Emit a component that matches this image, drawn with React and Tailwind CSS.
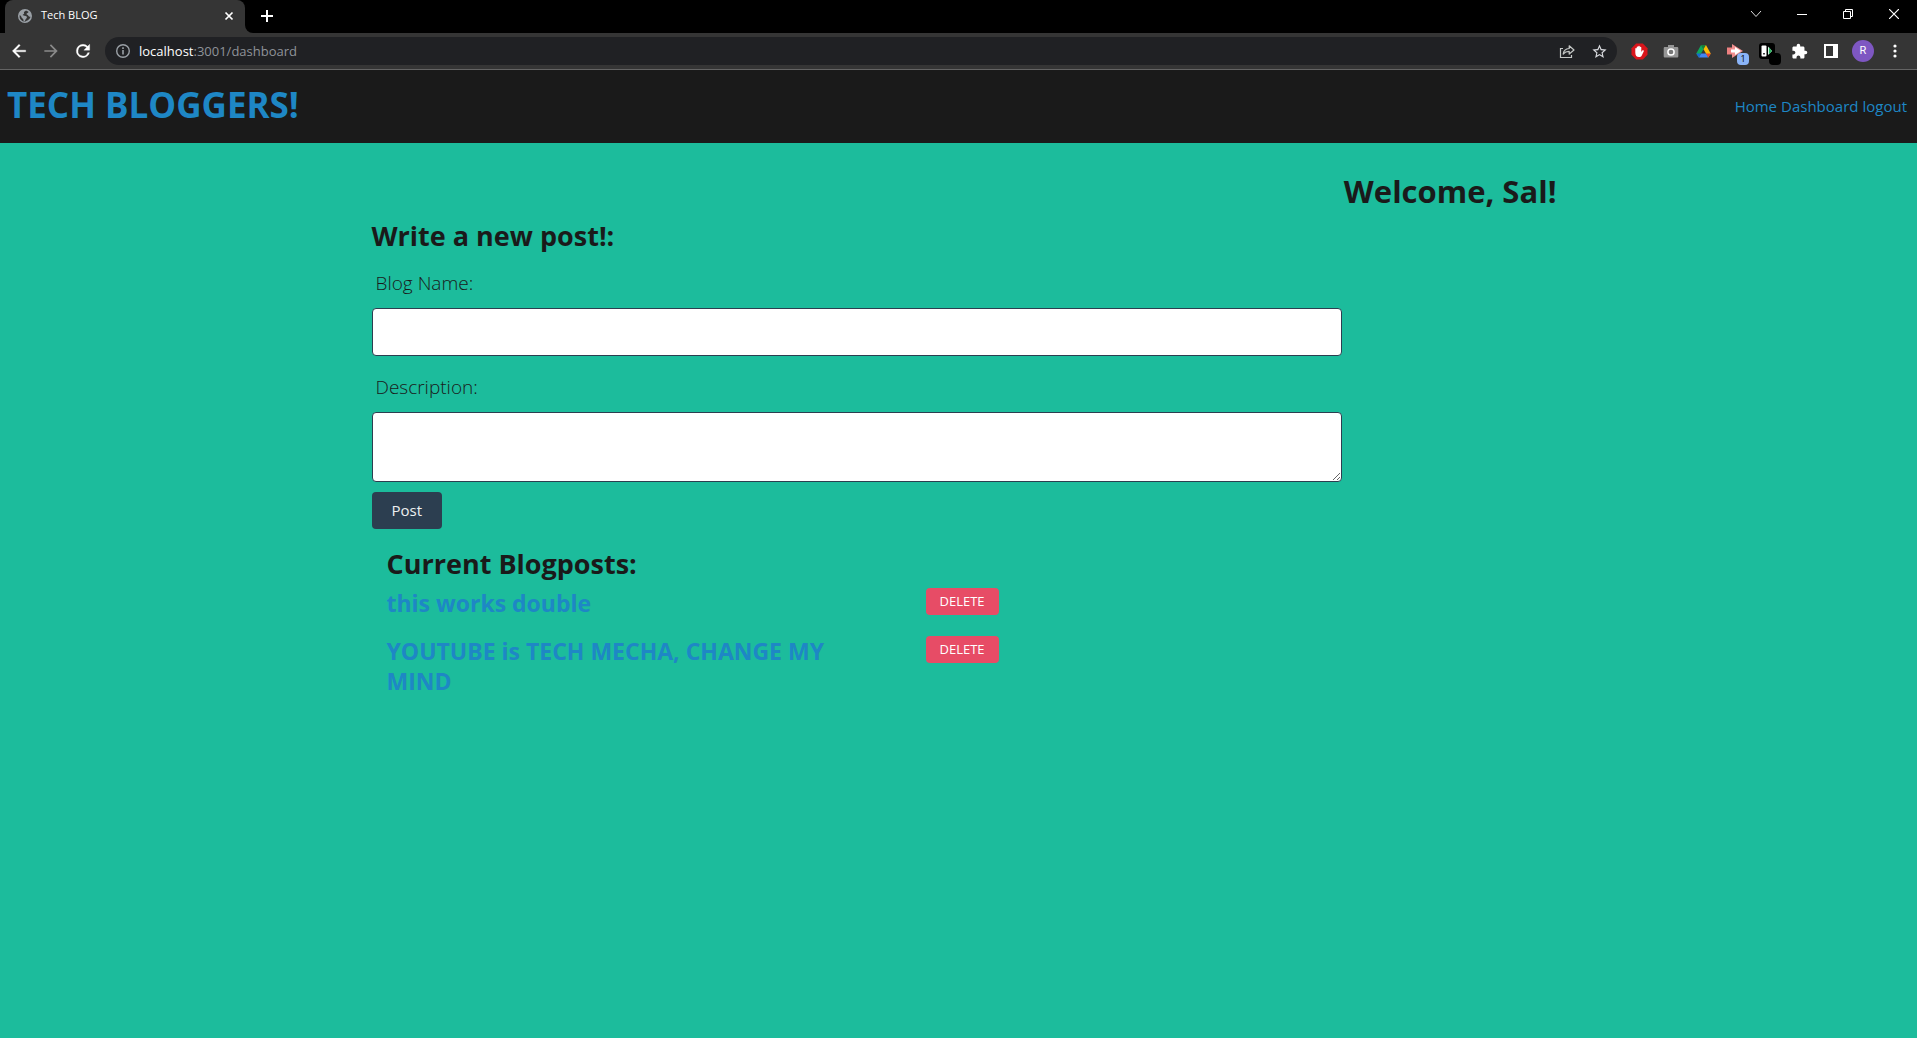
import React from "react";

const posts = ["this works double", "YOUTUBE is TECH MECHA, CHANGE MY MIND"];

function Svg({ size = 16, box = 24, children, ...rest }) {
  return (
    <svg width={size} height={size} viewBox={`0 0 ${box} ${box}`} fill="none" aria-hidden="true" {...rest}>
      {children}
    </svg>
  );
}

function Cell({ label, children }) {
  return (
    <button type="button" aria-label={label} className="relative flex h-9 w-8 shrink-0 items-center justify-center">
      {children}
    </button>
  );
}

function WindowButton({ label, children }) {
  return (
    <button type="button" aria-label={label} className="flex h-[27px] w-[46px] items-center justify-center">
      {children}
    </button>
  );
}

function TabStrip() {
  return (
    <div className="flex h-[33px] items-start bg-black text-white">
      <div className="relative ml-[5px] flex h-[33px] w-60 items-center rounded-t-lg bg-[#353535] pb-[2px] pl-3 pr-2">
        <Svg size={16} box={24} className="shrink-0">
          <path
            fill="#9aa0a6"
            d="M12 1.5a10.500 10.500 0 1 0 0 21 10.500 10.500 0 0 0 0-21Z"
          />
          <path
            fill="#353535"
            d="M13.500 3.600c-1 .8-2 1.400-3 2.400-.5.900.4 1.400.2 2.300-.4 1-1.700.9-2 1.900-.1 1 .900 1.200 2 1.300 1.700.2 3.300.200 4 1.600.5 1.100-.1 2.100-1 2.900-.9.700-1.200 1.600-1.500 2.600-.3.900-.9 1.600-1.700 1.700-1-.6-.7-1.900-1-2.900-.3-1.200-1.800-1.500-2.400-2.600-.6-1-.6-2.300-1.400-3.200-.5-.5-1.200-.7-1.900-.8A8.500 8.500 0 0 0 12 20.500c.7-.8 1.500-1 2.500-1.500 2.500-1 5-3 5.800-6-1.500.6-2.600-.2-3.300-1.500-.6-1.200-2-1-2.600-2-.4-1 .5-1.700 1.400-2 1-.3 1.500-1 1.400-2Z"
          />
        </Svg>
        <span className="ml-2 flex-1 text-[11px]">Tech BLOG</span>
        <button type="button" aria-label="Close tab" className="flex size-4 items-center justify-center">
          <Svg size={10} box={10}>
            <path d="M1.500 1.500l7 7M8.500 1.500l-7 7" stroke="#fff" strokeWidth="1.700" />
          </Svg>
        </button>
        <span className="absolute bottom-0 left-full size-2 bg-[#353535]">
          <span className="block size-2 rounded-bl-lg bg-black" />
        </span>
      </div>
      <button type="button" aria-label="New tab" className="ml-2 flex h-8 w-7 items-center justify-center">
        <Svg size={12} box={12}>
          <path d="M6 0v12M0 6h12" stroke="#fff" strokeWidth="2" />
        </Svg>
      </button>
      <div className="ml-auto flex">
        <WindowButton label="Search tabs">
          <Svg size={12} box={12}>
            <path d="M1 3l5 5.500L11 3" stroke="#ddd" />
          </Svg>
        </WindowButton>
        <WindowButton label="Minimize">
          <Svg size={10} box={10}>
            <path d="M0 5.500h10" stroke="#fff" />
          </Svg>
        </WindowButton>
        <WindowButton label="Restore">
          <Svg size={10} box={10}>
            <path d="M.5 2.500h7v7h-7zM2.500 2.500v-2h7v7h-2" stroke="#fff" />
          </Svg>
        </WindowButton>
        <WindowButton label="Close">
          <Svg size={10} box={10}>
            <path d="M0 0l10 10M10 0L0 10" stroke="#fff" strokeWidth="1.200" />
          </Svg>
        </WindowButton>
      </div>
    </div>
  );
}

function Toolbar() {
  return (
    <div className="flex h-[37px] items-center border-b border-[#646464] bg-[#353535] pl-[3px] pr-[6px]">
      <Cell label="Back">
        <Svg size={20} box={24}>
          <path fill="#fff" d="M20 11H7.830l5.590-5.590L12 4l-8 8 8 8 1.410-1.410L7.830 13H20z" stroke="#fff" strokeWidth=".4" />
        </Svg>
      </Cell>
      <Cell label="Forward">
        <Svg size={20} box={24}>
          <path fill="#8a8a8a" d="M4 13h12.170l-5.590 5.590L12 20l8-8-8-8-1.410 1.410L16.170 11H4z" />
        </Svg>
      </Cell>
      <Cell label="Reload">
        <Svg size={20} box={24}>
          <path
            fill="#fff"
            stroke="#fff"
            strokeWidth=".4"
            d="M17.650 6.350A7.960 7.960 0 0 0 12 4a8 8 0 1 0 7.730 10h-2.080A6 6 0 1 1 12 6c1.660 0 3.140.69 4.220 1.780L13 11h7V4z"
          />
        </Svg>
      </Cell>
      <div className="ml-[6px] flex h-7 min-w-0 flex-1 items-center rounded-full bg-[#202124] pl-[10px] pr-[2px]">
        <Svg size={16} box={16} className="shrink-0">
          <circle cx="8" cy="8" r="6.300" stroke="#9aa0a6" strokeWidth="1.400" />
          <path d="M8 7v4.500M8 4.300v1.600" stroke="#9aa0a6" strokeWidth="1.600" />
        </Svg>
        <div className="ml-2 flex-1 whitespace-nowrap text-[13px] leading-5 text-[#8f9399]">
          <span className="text-white">localhost</span>:3001/dashboard
        </div>
        <Cell label="Share">
          <Svg size={16} box={16}>
            <path d="M4 5.500H1.500v9h11V12" stroke="#c4c7c5" strokeWidth="1.200" />
            <path d="M4.200 11c.4-3.500 2.600-5.300 6-5.500V2.800L15 7l-4.800 4V8.400c-2.600 0-4.500.8-6 2.600Z" stroke="#c4c7c5" strokeWidth="1.200" strokeLinejoin="round" />
          </Svg>
        </Cell>
        <Cell label="Bookmark this tab">
          <Svg size={17} box={24}>
            <path
              fill="#dadce0"
              d="m22 9.240-7.190-.62L12 2 9.190 8.630 2 9.240l5.460 4.730L5.820 21 12 17.270 18.180 21l-1.630-7.030zM12 15.400l-3.760 2.270 1-4.280-3.320-2.880 4.380-.38L12 6.100l1.710 4.040 4.380.38-3.320 2.880 1 4.280z"
            />
          </Svg>
        </Cell>
      </div>
      <div className="ml-[6px] flex items-center">
        <Cell label="AdBlock">
          <Svg size={17} box={17}>
            <path d="M5.200.500h6.600l4.700 4.700v6.600l-4.700 4.700H5.200L.500 11.800V5.200z" fill="#d9151b" />
            <path
              d="M4.300 9.500V5.600c0-.9 1.400-.9 1.400 0V4.200c0-.9 1.500-.9 1.500 0v-.6c0-1 1.600-1 1.600 0v.8c0-.9 1.500-.9 1.500 0V9l1-1.400c.7-.8 1.900-.2 1.400.8l-1.800 3.800c-.7 1.400-1.500 1.900-3 1.900-2.300 0-3.600-1.600-3.600-4.600Z"
              fill="#fff"
            />
          </Svg>
        </Cell>
        <Cell label="Screenshot">
          <Svg size={16} box={16}>
            <path d="M5 2h6v2h3c.8 0 1.300.5 1.300 1.200v8c0 .8-.5 1.300-1.300 1.300H2c-.8 0-1.300-.5-1.300-1.300v-8C.700 4.500 1.200 4 2 4h3z" fill="#969696" />
            <circle cx="8" cy="9" r="3.100" fill="#777" stroke="#fff" strokeWidth="1.500" />
          </Svg>
        </Cell>
        <Cell label="Google Drive">
          <Svg size={15} box={16}>
            <path d="M5.400 1h5.200L8 5.500z" fill="#188038" />
            <path d="M5.400 1 .3 10l2.600 4.500L8 5.500z" fill="#0fa85a" />
            <path d="M10.600 1 8 5.500l5.100 9 2.600-4.500z" fill="#fbbc04" />
            <path d="M2.900 14.500 5.500 10h5.100l2.500 4.500z" fill="#4285f4" />
            <path d="M10.600 10h5.100l-2.600 4.500z" fill="#ea4335" />
            <path d="M.3 10h5.200l-2.600 4.500z" fill="#1967d2" />
          </Svg>
        </Cell>
        <Cell label="Redirect, 1 active">
          <Svg size={16} box={16}>
            <path d="M0 4.500h6v7H0z" fill="#ed8080" />
            <path d="M5 1l11 7-11 7z" fill="#f08f8f" />
            <path d="M4 6.500h4V4l6 4-6 4V9.500H4z" fill="#fff" />
          </Svg>
          <span className="absolute bottom-1 right-0.5 flex h-3 w-3 items-center justify-center rounded-sm bg-[#8ab4f8] text-[9px] leading-3 text-black">
            1
          </span>
        </Cell>
        <Cell label="Recorder">
          <Svg size={16} box={16}>
            <rect width="16" height="16" rx="3" fill="#000" />
            <rect x="2.500" y="2.500" width="5" height="11" rx="1" fill="#fff" />
            <path d="M4.200 10.800h1.600" stroke="#111" strokeWidth="1.500" />
            <path d="M9 3.500l4 4.500-4 4z" fill="#fff" />
            <path d="M9.800 4l3.200 4-3.200 3.500z" fill="#2fb865" />
          </Svg>
          <span className="absolute bottom-1 right-0.5 size-3 rounded-sm bg-black" />
        </Cell>
        <Cell label="Extensions">
          <Svg size={17} box={24}>
            <path
              fill="#fff"
              d="M20.500 11H19V7c0-1.100-.9-2-2-2h-4V3.500a2.500 2.500 0 0 0-5 0V5H4c-1.100 0-1.990.9-1.990 2v3.800H3.500c1.490 0 2.700 1.210 2.700 2.700s-1.210 2.700-2.700 2.700H2V20c0 1.100.9 2 2 2h3.800v-1.500c0-1.490 1.210-2.700 2.700-2.700s2.700 1.210 2.700 2.700V22H17c1.100 0 2-.9 2-2v-4h1.500a2.500 2.500 0 0 0 0-5z"
            />
          </Svg>
        </Cell>
        <Cell label="Side panel">
          <Svg size={14} box={14}>
            <path d="M0 0h14v14H0zM2 2v10h7V2z" fill="#fff" fillRule="evenodd" />
          </Svg>
        </Cell>
        <Cell label="Profile R">
          <span className="flex size-[22px] items-center justify-center rounded-full bg-[#7e57c2] font-[Roboto,sans-serif] text-[11px] text-white">
            R
          </span>
        </Cell>
        <Cell label="Menu">
          <Svg size={14} box={14}>
            <circle cx="7" cy="2" r="1.600" fill="#fff" />
            <circle cx="7" cy="7" r="1.600" fill="#fff" />
            <circle cx="7" cy="12" r="1.600" fill="#fff" />
          </Svg>
        </Cell>
      </div>
    </div>
  );
}

function PostForm() {
  return (
    <form className="w-full max-w-[970px]" onSubmit={(e) => e.preventDefault()}>
      <h2 className="text-[27px] font-bold leading-[38px]">Write a new post!:</h2>
      <label htmlFor="blog-name" className="mt-[14px] block px-1 text-[19px] font-light leading-7">
        Blog Name:
      </label>
      <input id="blog-name" type="text" className="mt-[11px] block h-12 w-full rounded border border-[#2c3e50] bg-white px-3" />
      <label htmlFor="description" className="mt-[17px] block px-1 text-[19px] font-light leading-7">
        Description:
      </label>
      <textarea id="description" className="mt-[11px] block h-[70px] w-full rounded border border-[#2c3e50] bg-white px-3" />
      <button type="submit" className="mt-[10px] block h-[37px] rounded bg-[#2c3e50] px-5 text-[15px] text-[#ecf0f1]">
        Post
      </button>
    </form>
  );
}

function PostList() {
  return (
    <section className="mt-4 px-[15px]">
      <h2 className="text-[27px] font-bold leading-[38px]">Current Blogposts:</h2>
      <ul className="mt-[5px] flex flex-col gap-[18px]">
        {posts.map((title) => (
          <li key={title} className="flex items-start gap-[59px]">
            <h3 className="w-[480px] text-[23px] font-bold leading-[30px] text-[#1e87c5]">
              <a href="#post">{title}</a>
            </h3>
            <button type="button" className="h-[27px] rounded bg-[#e74c66] px-[14px] text-[13px] text-white">
              DELETE
            </button>
          </li>
        ))}
      </ul>
    </section>
  );
}

export default function App() {
  return (
    <div className="flex min-h-screen flex-col bg-[#1cbc9c] font-['Open_Sans','Noto_Sans',sans-serif] text-[#1a1a1a]">
      <TabStrip />
      <Toolbar />
      <header className="flex h-[73px] items-center justify-between bg-[#1a1a1a] pl-[7px] pr-[10px] text-[#1e87c5]">
        <h1 className="pb-1 text-[35px] font-bold leading-[48px]">
          <a href="#home">TECH BLOGGERS!</a>
        </h1>
        <nav className="flex gap-1 text-[15px]">
          <a href="#home">Home</a>
          <a href="#dashboard">Dashboard</a>
          <a href="#logout">logout</a>
        </nav>
      </header>
      <main className="mx-auto w-full max-w-[1200px] pl-[13px]">
        <h1 className="mt-[26px] pr-[2px] text-right text-[31px] font-bold leading-[44px]">Welcome, Sal!</h1>
        <div className="mt-1">
          <PostForm />
        </div>
        <PostList />
      </main>
    </div>
  );
}
